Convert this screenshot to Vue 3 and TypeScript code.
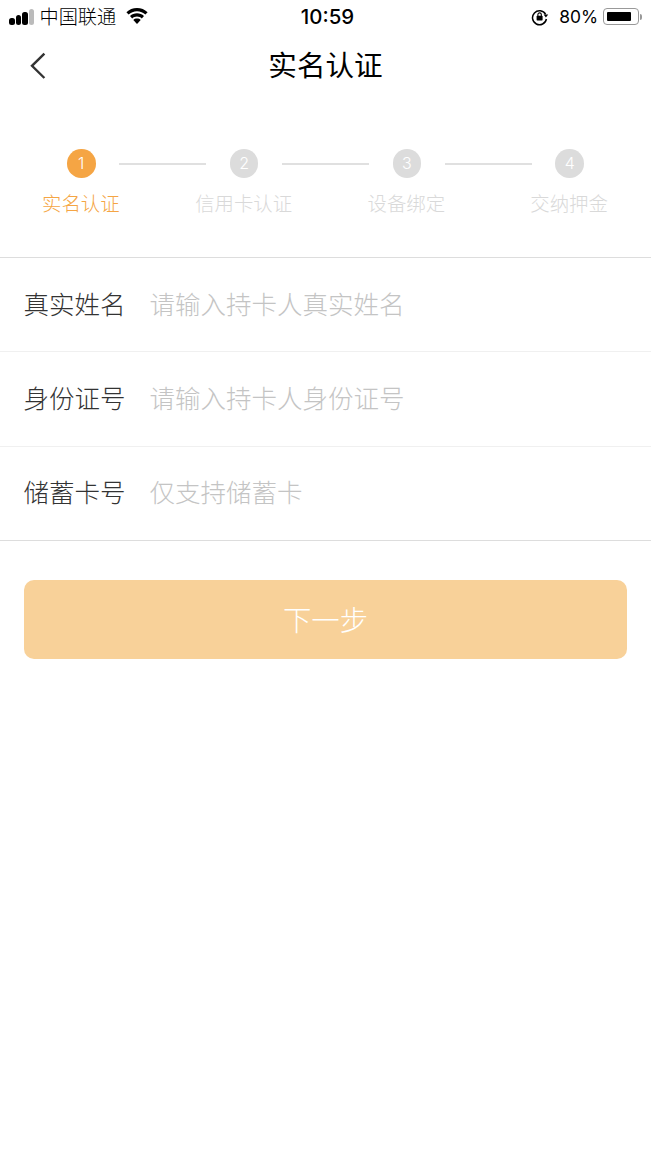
<script setup lang="ts">
const steps: string[] = ['实名认证', '信用卡认证', '设备绑定', '交纳押金']
const fields: { label: string; hint: string }[] = [
  { label: '真实姓名', hint: '请输入持卡人真实姓名' },
  { label: '身份证号', hint: '请输入持卡人身份证号' },
  { label: '储蓄卡号', hint: '仅支持储蓄卡' },
]
</script>

<template>
  <div class="page">
    <div class="status">
      <div class="status-left">
        <span class="signal"><i></i><i></i><i></i><i class="off"></i></span>
        <span class="carrier">中国联通</span>
        <svg class="wifi" width="22" height="16" viewBox="0 0 22 16">
          <path d="M11 0C6.9 0 3.2 1.6.4 4.2l2.2 2.3C4.8 4.5 7.8 3.2 11 3.2s6.2 1.3 8.4 3.3l2.2-2.3C18.8 1.6 15.1 0 11 0z" fill="#000"/>
          <path d="M11 5.3c-2.7 0-5.2 1-7 2.8l2.2 2.3c1.3-1.2 3-1.9 4.8-1.9s3.5.7 4.8 1.9L18 8.1c-1.8-1.8-4.3-2.8-7-2.8z" fill="#000"/>
          <path d="M11 10.5c-1.5 0-2.8.5-3.7 1.4L11 16l3.7-4.1c-.9-.9-2.2-1.4-3.7-1.4z" fill="#000"/>
        </svg>
      </div>
      <div class="time">10:59</div>
      <div class="status-right">
        <svg class="lock" width="18" height="18" viewBox="0 0 18 18">
          <path d="M14.6 6.3A7 7 0 1 0 15.4 11" fill="none" stroke="#000" stroke-width="1.5"/>
          <path d="M12.6 6.6h4.6L14.9 9.6z" fill="#000"/>
          <rect x="5.6" y="7.8" width="6" height="4.6" rx=".6" fill="#000"/>
          <path d="M6.9 8V6.6a1.7 1.7 0 0 1 3.4 0V8" fill="none" stroke="#000" stroke-width="1.1"/>
        </svg>
        <span class="pct">80%</span>
        <span class="battery"><span class="level"></span></span>
        <span class="cap"></span>
      </div>
    </div>

    <header class="nav">
      <svg class="back" width="18" height="28" viewBox="0 0 18 28">
        <path d="M16.4 1.6 4 13.8 16.4 26" fill="none" stroke="#333" stroke-width="2.4"/>
      </svg>
      <h1 class="title">实名认证</h1>
    </header>

    <section class="steps">
      <div class="track">
        <template v-for="(_, i) in steps" :key="i">
          <span class="dot" :class="{ on: i === 0 }">{{ i + 1 }}</span>
          <span v-if="i < steps.length - 1" class="line"></span>
        </template>
      </div>
      <div class="labels">
        <span v-for="(s, i) in steps" :key="s" class="label" :class="{ on: i === 0 }">{{ s }}</span>
      </div>
    </section>

    <section class="form">
      <div v-for="f in fields" :key="f.label" class="row">
        <span class="name">{{ f.label }}</span>
        <span class="hint">{{ f.hint }}</span>
      </div>
    </section>

    <div class="action">
      <button class="next" type="button">下一步</button>
    </div>
  </div>
</template>

<style>
html, body { margin: 0; background: #fff; }
</style>

<style scoped>
.page {
  width: 651px;
  height: 1157px;
  overflow: hidden;
  background: #fff;
  font-family: "Noto Sans CJK SC", "Liberation Sans", sans-serif;
  font-weight: 300;
}
.status {
  height: 33px;
  display: grid;
  grid-template-columns: 1fr auto 1fr;
  align-items: center;
  color: #000;
}
.status-left { display: flex; align-items: center; padding-left: 9px; }
.signal { display: flex; align-items: flex-end; gap: 1px; width: 26px; height: 16px; }
.signal i { width: 5.5px; border-radius: 2.5px; background: #000; }
.signal i:nth-child(1) { height: 6.5px; }
.signal i:nth-child(2) { height: 9.5px; }
.signal i:nth-child(3) { height: 12.5px; }
.signal i:nth-child(4) { height: 16px; }
.signal i.off { background: #bbb; }
.carrier { margin-left: 4.5px; font-size: 19.2px; line-height: 33px; }
.wifi { margin-left: 10px; margin-top: -2px; }
.time { font: 500 20.4px Inter, "Liberation Sans", sans-serif; padding-left: 4px; }
.status-right { display: flex; align-items: center; justify-content: flex-end; padding-right: 9px; }
.lock { margin-right: 10px; }
.pct { font: 400 17.4px Inter, "Liberation Sans", sans-serif; margin-right: 5px; }
.battery {
  box-sizing: border-box;
  width: 36px;
  height: 17px;
  padding: 3px;
  border: 1px solid #999;
  border-radius: 4px;
  display: block;
}
.level { display: block; width: 24px; height: 100%; background: #000; border-radius: 1px; }
.cap { width: 2px; height: 6px; margin-left: 1px; background: #999; border-radius: 0 2px 2px 0; }

.nav {
  height: 67px;
  box-sizing: border-box;
  padding-bottom: 4px;
  display: flex;
  align-items: center;
  justify-content: center;
  position: relative;
}
.back { position: absolute; left: 28px; top: 19px; }
.title { margin: 0; font-size: 28.6px; font-weight: 400; color: #000; line-height: 1; }

.steps { padding-top: 49px; height: 158px; box-sizing: border-box; border-bottom: 1px solid #ddd; }
.track { display: flex; align-items: center; padding: 0 67px; gap: 23.5px; }
.dot {
  flex: none;
  width: 28.5px;
  height: 28.5px;
  border-radius: 50%;
  background: #dcdcdc;
  color: #fff;
  font: 300 16px/28.5px Inter, "Liberation Sans", sans-serif;
  text-align: center;
}
.dot.on { background: #f5a544; }
.line { flex: 1; height: 2px; margin-top: 1px; background: #e0e0e0; }
.labels { display: grid; grid-template-columns: repeat(4, 1fr); margin-top: 10px; }
.label { text-align: center; font-size: 19.4px; line-height: 30px; color: #d9d9d9; margin-left: -1px; }
.label.on { color: #f5a544; }

.row {
  height: 94.4px;
  box-sizing: border-box;
  padding: 0 0 5px 23.5px;
  display: flex;
  align-items: center;
  border-bottom: 1px solid #f0f0f0;
}
.row:last-child { border-bottom-color: #ddd; }
.name { width: 126px; font-size: 25.5px; color: #333; }
.hint { font-size: 25.5px; color: #c4c4c4; }

.action { padding: 39px 24px 0; }
.next {
  display: block;
  width: 100%;
  height: 79px;
  padding: 0 0 2px;
  border: 0;
  border-radius: 10px;
  background: #f8d199;
  color: #fff;
  font-family: inherit;
  font-weight: 300;
  font-size: 28.4px;
}
</style>
